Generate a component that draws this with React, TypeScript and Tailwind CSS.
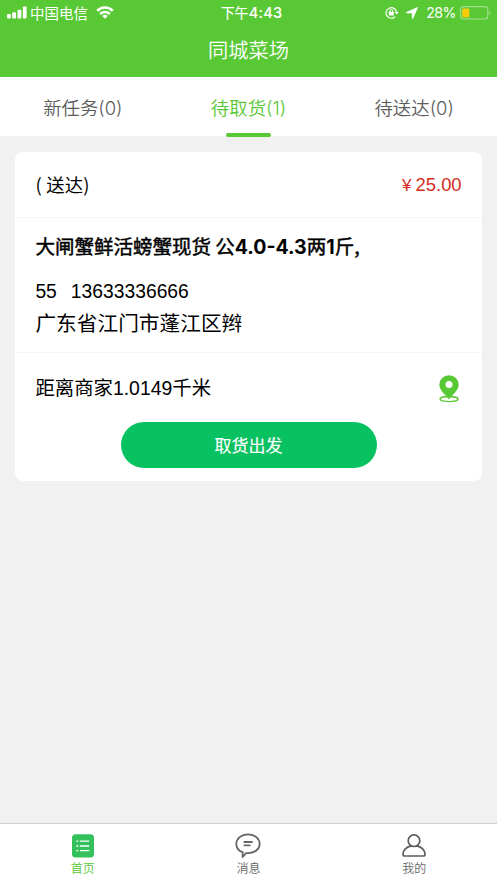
import type { ReactNode } from 'react'

interface Tab {
  label: string
  count: number
  active?: boolean
}

interface NavItem {
  label: string
  icon: ReactNode
  active?: boolean
}

const tabs: Tab[] = [
  { label: '新任务', count: 0 },
  { label: '待取货', count: 1, active: true },
  { label: '待送达', count: 0 },
]

function SignalIcon() {
  return (
    <svg width="20" height="13" viewBox="0 0 20 13" fill="#fff" aria-hidden>
      <rect x="0" y="8" width="3.8" height="4.5" rx="1" />
      <rect x="5.2" y="6.3" width="3.8" height="6.2" rx="1" />
      <rect x="10.5" y="3.8" width="3.8" height="8.7" rx="1" />
      <rect x="15.8" y="0.6" width="3.8" height="11.9" rx="1" />
    </svg>
  )
}

function WifiIcon() {
  return (
    <svg width="18" height="13" viewBox="0 0 18 13" fill="none" stroke="#fff" strokeWidth="2.5" aria-hidden>
      <path d="M1.2 4.8a11 11 0 0 1 15.6 0" />
      <path d="M4.1 8a7 7 0 0 1 9.8 0" />
      <path d="M6.3 10.1a3.9 3.9 0 0 1 5.4 0L9 12.8z" fill="#fff" stroke="none" />
    </svg>
  )
}

function RotationLockIcon() {
  return (
    <svg width="14" height="13" viewBox="0 0 14 13" fill="none" stroke="#fff" strokeWidth="1.2" aria-hidden>
      <path d="M10.2 10.6A5.3 5.3 0 1 1 11.6 6.2" />
      <path d="M9.6 6h4.2l-2.1 2.6z" fill="#fff" stroke="none" />
      <rect x="3.8" y="5.8" width="5" height="3.7" rx=".5" fill="#fff" stroke="none" />
      <path d="M4.9 6V4.8a1.4 1.4 0 0 1 2.8 0V6" strokeWidth="1" />
    </svg>
  )
}

function LocationArrowIcon() {
  return (
    <svg width="12" height="12" viewBox="0 0 12 12" fill="#fff" stroke="#fff" strokeWidth=".8" strokeLinejoin="round" aria-hidden>
      <path d="M11.5.5 6.9 11.3a.3.3 0 0 1-.6-.1V5.9H.8a.3.3 0 0 1-.1-.6z" />
    </svg>
  )
}

function BatteryIcon() {
  return (
    <svg width="31" height="14" viewBox="0 0 31 14" fill="none" aria-hidden>
      <rect x=".6" y=".6" width="27.2" height="12.4" rx="3" stroke="#a5e08f" strokeWidth="1.1" />
      <rect x="2.3" y="2.4" width="7" height="8.8" rx="1" fill="#fecb0b" />
      <path d="M29.3 4.7c1.5.5 1.5 3.7 0 4.2z" fill="#a5e08f" />
    </svg>
  )
}

function PinIcon() {
  return (
    <svg width="20" height="28" viewBox="0 0 20 28" fill="none" aria-hidden>
      <ellipse cx="10" cy="24.1" rx="9.1" ry="2.6" stroke="#58c834" strokeWidth="1.3" />
      <path d="M10 24.6C7.8 20.4.3 15.8.3 9.7a9.7 9.4 0 0 1 19.4 0c0 6.1-7.5 10.7-9.7 14.9z" fill="#58c834" />
      <circle cx="10" cy="9.6" r="3.5" fill="#fff" />
    </svg>
  )
}

function ListIcon() {
  return (
    <svg width="24" height="24" viewBox="0 0 24 24" aria-hidden>
      <rect x="1" y=".2" width="22" height="23.3" rx="3.5" fill="#34c15c" />
      <path d="M5.3 7.2h2M5.3 12h2M5.3 16.7h2M8.9 7.2h9.3M8.9 12h9.3M8.9 16.7h9.3" stroke="#fff" strokeWidth="1.3" />
    </svg>
  )
}

function MessageIcon() {
  return (
    <svg width="26" height="26" viewBox="0 0 26 26" fill="none" stroke="#666" strokeWidth="1.8" strokeLinejoin="round" aria-hidden>
      <path d="M7.7 19.2C3.8 17.7 1.3 14.6 1.3 10.9 1.3 5.6 6.5 1.3 13 1.3s11.7 4.3 11.7 9.6S19.5 20.2 13 20.2c-.7 0-1.3 0-1.9-.1l-3.5 3.9z" />
      <path d="M8.6 9h9.1M8.6 12.3h6.9" />
    </svg>
  )
}

function UserIcon() {
  return (
    <svg width="26" height="26" viewBox="0 0 26 26" fill="none" stroke="#5c5c5c" strokeWidth="1.7" aria-hidden>
      <circle cx="13" cy="7.7" r="5.8" />
      <path d="M10.5 12.9C5.4 13.6 2 17.2 2 21.2c0 1.2.5 1.8 1.7 1.8h18.6c1.2 0 1.7-.6 1.7-1.8 0-4-3.4-7.6-8.5-8.3" />
    </svg>
  )
}

const navItems: NavItem[] = [
  { label: '首页', icon: <ListIcon />, active: true },
  { label: '消息', icon: <MessageIcon /> },
  { label: '我的', icon: <UserIcon /> },
]

function StatusBar() {
  return (
    <div className="grid h-[25px] grid-cols-3 items-center text-white">
      <div className="flex items-center pl-[7px]">
        <SignalIcon />
        <span className="ml-[3px] text-[14.5px] leading-6">中国电信</span>
        <span className="ml-[8px]"><WifiIcon /></span>
      </div>
      <div className="pl-[6px] text-center text-[14px] leading-6 [-webkit-text-stroke:0.15px_currentColor]">
        下午<span className="font-['Inter'] text-[14.5px] font-medium tracking-[0.3px]">4:43</span>
      </div>
      <div className="flex items-center justify-end pr-[6px]">
        <RotationLockIcon />
        <span className="ml-[7px]"><LocationArrowIcon /></span>
        <span className="mr-[4px] ml-[8px] font-['Inter'] text-[14.2px] leading-5 tracking-[-0.5px]">28%</span>
        <BatteryIcon />
      </div>
    </div>
  )
}

function OrderCard() {
  return (
    <section className="mx-[15.4px] mt-[15px] h-[329px] rounded-lg bg-white text-black">
      <div className="flex h-[66px] items-center justify-between border-b border-[#f5f5f5] px-5 text-[18.4px]">
        <span className="pt-px tracking-[0.2px] whitespace-pre">( 送达)</span>
        <span className="pt-px font-['Liberation_Sans','Noto_Sans_CJK_SC',sans-serif] text-[#d52b20]">
          <span className="mr-[4px] text-[17px]">¥</span>25.00
        </span>
      </div>

      <div className="flex h-[135px] flex-col border-b border-[#f5f5f5] px-5 pt-3">
        <h2 className="h-8 text-[19.5px] leading-8 font-normal whitespace-nowrap [-webkit-text-stroke:0.45px_currentColor]">
          大闸蟹鲜活螃蟹现货 公
          <span className="font-['Inter'] font-bold [-webkit-text-stroke:0px]">4.0-4.3</span>两
          <span className="font-['Inter'] font-bold [-webkit-text-stroke:0px]">1</span>斤,
        </h2>
        <p className="mt-[14px] h-[30px] font-['Liberation_Sans',sans-serif] text-[19.3px] leading-8">
          55<span className="ml-[14px]">13633336666</span>
        </p>
        <p className="h-8 text-[20.7px] leading-8">广东省江门市蓬江区辫</p>
      </div>

      <div className="flex h-[69px] items-center justify-between px-5">
        <span className="pt-[2px] font-['Liberation_Sans','Noto_Sans_CJK_SC',sans-serif] text-[19.4px]">距离商家1.0149千米</span>
        <span className="mr-[3px] pt-[3px]"><PinIcon /></span>
      </div>

      <button className="mx-auto block h-[46px] w-64 rounded-full bg-[#08c160] text-[17px] text-white [-webkit-text-stroke:0.15px_currentColor]">
        取货出发
      </button>
    </section>
  )
}

export default function App() {
  return (
    <div className="flex h-[883px] w-[497px] flex-col overflow-hidden bg-[#f1f1f1] font-['Noto_Sans_CJK_SC',sans-serif]">
      <header className="h-[77px] bg-[#58c834]">
        <StatusBar />
        <h1 className="text-center text-[20.3px] leading-[49px] font-[350] text-white">同城菜场</h1>
      </header>

      <nav className="grid h-[60px] grid-cols-3 border-b border-[#f1f1f1] bg-white">
        {tabs.map((tab) => (
          <div
            key={tab.label}
            className={`flex flex-col items-center text-[18.4px] font-[350] ${tab.active ? 'text-[#58c834]' : 'text-[#5c5c5c]'}`}
          >
            <span className="h-14 leading-[60px]">
              {tab.label}<span className="font-['Inter'] font-light">({tab.count})</span>
            </span>
            {tab.active && <span className="h-1 w-[45px] shrink-0 rounded-full bg-[#58c834]" />}
          </div>
        ))}
      </nav>

      <main className="flex-1">
        <OrderCard />
      </main>

      <footer className="grid h-[60px] grid-cols-3 border-t border-[#cfcfcf] bg-white">
        {navItems.map((item) => (
          <div
            key={item.label}
            className={`flex flex-col items-center pt-2 text-[12px] font-[350] ${item.active ? 'text-[#58c834]' : 'text-[#666]'}`}
          >
            <span className="flex h-[27px] items-center">{item.icon}</span>
            <span className="leading-[18px]">{item.label}</span>
          </div>
        ))}
      </footer>
    </div>
  )
}
